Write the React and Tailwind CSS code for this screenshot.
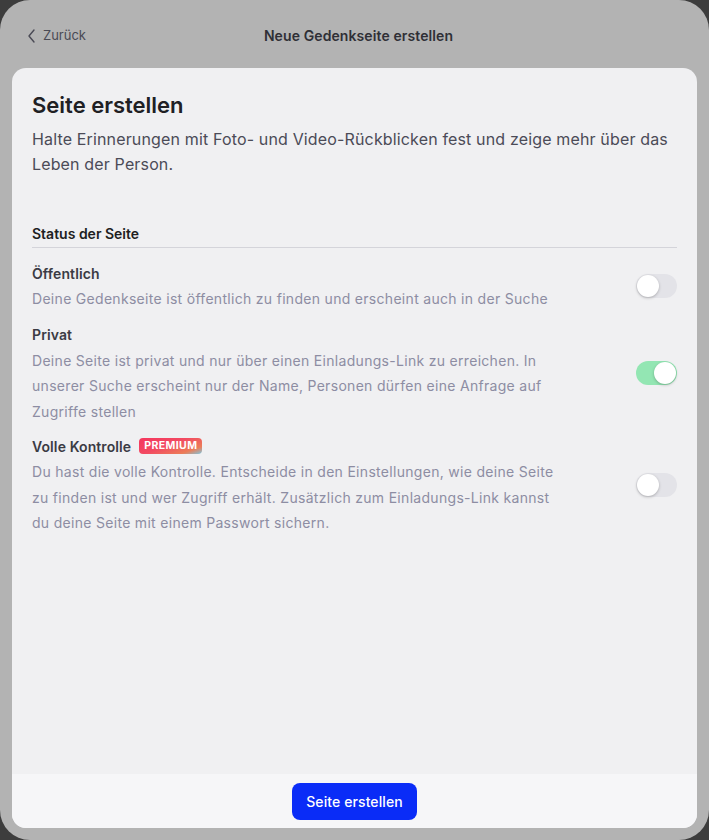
import React from 'react'

const font = { fontFamily: 'Inter, "Noto Sans", sans-serif' }

function Toggle({ on }) {
  return (
    <div className={`w-[41px] h-[24px] rounded-full p-[2px] flex shrink-0 ${on ? 'bg-[#93e6b3] justify-end' : 'bg-[#e3e3e8] justify-start'}`}>
      <div className="w-[22px] h-[22px] -m-[1px] rounded-full bg-white shadow-[0_1px_3px_rgba(0,0,0,0.25)]" />
    </div>
  )
}

function Option({ title, badge, children, on }) {
  return (
    <div className="flex items-center justify-between">
      <div className="w-[530px]">
        <div className="flex items-center gap-[8px] h-[24px]">
          <span className="text-[14px] font-semibold text-[#3b3b44] tracking-[0.1px]">{title}</span>
          {badge && (
            <span className="text-[10.5px] font-bold leading-none text-white px-[5px] py-[3px] rounded-[4px] bg-[linear-gradient(160deg,#f5365e_0%,#f24a62_45%,#ec7d58_80%,#7cc7e0_100%)] tracking-[0.4px]">
              PREMIUM
            </span>
          )}
        </div>
        <p className="text-[14px] leading-[25.5px] text-[#8d8da3] mt-[1px] tracking-[0.3px]">{children}</p>
      </div>
      <Toggle on={on} />
    </div>
  )
}

export default function App() {
  return (
    <div className="w-[709px] h-[840px] bg-[#3d3d3d]" style={font}>
      <div className="w-full h-full bg-[#b3b3b3] rounded-[30px] flex flex-col px-[12px] pb-[12px]">

        {/* Header */}
        <div className="h-[68px] relative flex items-center justify-center shrink-0">
          <div className="absolute left-[15px] top-[26px] flex items-center gap-[6px] text-[13px] text-[#4a4a55]">
            <svg width="10" height="16" viewBox="0 0 10 16" fill="none" stroke="#4a4a55" strokeWidth="1.4" strokeLinecap="round" strokeLinejoin="round">
              <path d="M7 2 L2 8 L7 14" />
            </svg>
            <span>Zurück</span>
          </div>
          <span className="text-[14px] font-semibold text-[#2f2f36] mt-[2px] ml-[8px] tracking-[0.1px]">Neue Gedenkseite erstellen</span>
        </div>

        {/* Card */}
        <div className="flex-1 bg-[#f0f0f2] rounded-[14px] flex flex-col overflow-hidden">
          <div className="flex-1 px-[20px] pt-[23px]">
            <h1 className="text-[22px] font-semibold text-[#202024] leading-[28px]">Seite erstellen</h1>
            <p className="text-[16px] leading-[25px] text-[#4b4b57] mt-[8px] tracking-[0.15px]">
              Halte Erinnerungen mit Foto- und Video-Rückblicken fest und zeige mehr über das Leben der Person.
            </p>

            <div className="mt-[46px] pb-[3px] border-b border-[#d4d4da] text-[14px] font-semibold text-[#1e1e22]">
              Status der Seite
            </div>

            <div className="flex flex-col gap-[11px] mt-[13px]">
              <Option title="Öffentlich" on={false}>
                Deine Gedenkseite ist öffentlich zu finden und erscheint auch in der Suche
              </Option>
              <Option title="Privat" on={true}>
                Deine Seite ist privat und nur über einen Einladungs-Link zu erreichen. In unserer Suche erscheint nur der Name, Personen dürfen eine Anfrage auf Zugriffe stellen
              </Option>
              <div className="-mt-[1px]">
                <Option title="Volle Kontrolle" badge on={false}>
                  Du hast die volle Kontrolle. Entscheide in den Einstellungen, wie deine Seite zu finden ist und wer Zugriff erhält. Zusätzlich zum Einladungs-Link kannst du deine Seite mit einem Passwort sichern.
                </Option>
              </div>
            </div>
          </div>

          {/* Footer */}
          <div className="h-[54px] bg-[#f6f6f8] flex items-center justify-center shrink-0">
            <button className="h-[37px] px-[14px] rounded-[8px] bg-[#0a2cf7] text-white text-[14px] font-medium tracking-[0.1px]">
              Seite erstellen
            </button>
          </div>
        </div>
      </div>
    </div>
  )
}
